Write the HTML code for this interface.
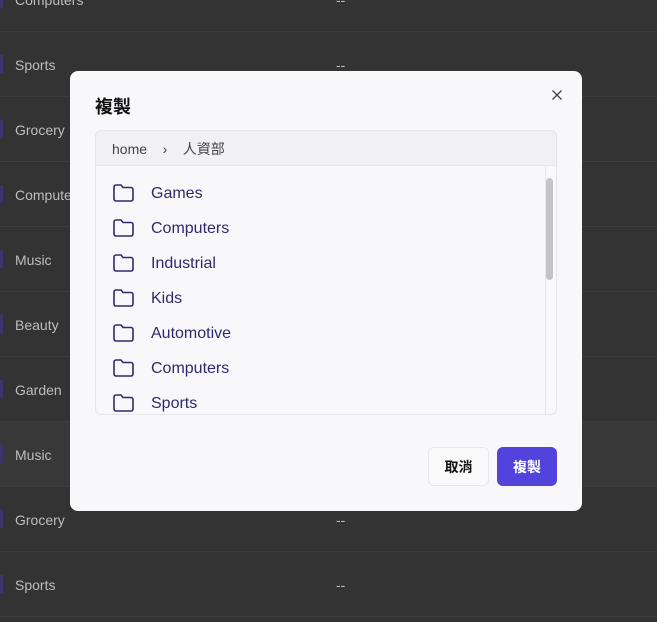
<!DOCTYPE html>
<html><head><meta charset="utf-8"><style>
*{box-sizing:border-box;margin:0;padding:0}
body{width:657px;height:622px;overflow:hidden;background:#333;font-family:"Liberation Sans","Noto Sans CJK TC",sans-serif;position:relative}
.row{position:absolute;left:0;width:657px;height:65px;border-bottom:1px solid #3d3d3d;color:#bdbdbd;font-size:14px}
.row .n{position:absolute;left:15px;top:50%;transform:translateY(-45%)}
.row .d{position:absolute;left:336px;top:50%;transform:translateY(-45%)}
.row .b{position:absolute;left:0;top:23px;width:3px;height:18px;background:#3b3470}
.modal{position:absolute;left:70px;top:71px;width:512px;height:440px;background:#f8f8fb;border-radius:8px}
.title{position:absolute;left:25px;top:22px;font-size:18px;font-weight:bold;color:#111}
.x{position:absolute;left:481px;top:18px}
.bc{position:absolute;left:25px;top:59px;width:462px;height:36px;background:#f1f1f4;border:1px solid #e6e6ea;border-radius:6px 6px 0 0;font-size:14px;color:#444;padding:8px 16px}
.list{position:absolute;left:25px;top:95px;width:462px;height:249px;border:1px solid #e6e6ea;border-top:none;border-radius:0 0 6px 6px;overflow:hidden}
.sb{position:absolute;right:10px;top:0;width:1px;height:100%;background:#e6e6ea}
.th{position:absolute;right:3px;top:12px;width:7px;height:102px;background:#c4c4c8;border-radius:4px}
.it{position:absolute;left:16px;height:24px;display:flex;align-items:center;color:#2e2a6b;font-size:16px}
.it span{position:relative;top:1px}
.it svg{margin-right:16px}
.btn{position:absolute;top:376px;height:39px;border-radius:6px;font-size:14px;font-weight:bold;display:flex;align-items:center;justify-content:center}
</style></head><body>
<div class="row" style="top:-33px"><span class="b"></span><span class="n">Computers</span><span class="d">--</span></div>
<div class="row" style="top:32px"><span class="b"></span><span class="n">Sports</span><span class="d">--</span></div>
<div class="row" style="top:97px"><span class="b"></span><span class="n">Grocery</span><span class="d">--</span></div>
<div class="row" style="top:162px"><span class="b"></span><span class="n">Computers</span><span class="d">--</span></div>
<div class="row" style="top:227px"><span class="b"></span><span class="n">Music</span><span class="d">--</span></div>
<div class="row" style="top:292px"><span class="b"></span><span class="n">Beauty</span><span class="d">--</span></div>
<div class="row" style="top:357px"><span class="b"></span><span class="n">Garden</span><span class="d">--</span></div>
<div class="row" style="top:422px;background:#383838"><span class="b"></span><span class="n">Music</span><span class="d">--</span></div>
<div class="row" style="top:487px"><span class="b"></span><span class="n">Grocery</span><span class="d">--</span></div>
<div class="row" style="top:552px"><span class="b"></span><span class="n">Sports</span><span class="d">--</span></div>
<div class="modal">
<div class="title">複製</div>
<svg class="x" width="12" height="12" viewBox="0 0 12 12"><path d="M1.5 1.5l9 9M10.5 1.5l-9 9" stroke="#444" stroke-width="1.3"/></svg>
<div class="bc">home &nbsp;&nbsp;&nbsp;›&nbsp;&nbsp;&nbsp; 人資部</div>
<div class="list">
<div class="sb"></div><div class="th"></div>
<div class="it" style="top:15px"><svg width="23" height="20" viewBox="0 0 23 20"><path d="M2 4a2 2 0 0 1 2-2h5l2 2.5h8a2 2 0 0 1 2 2V16a2 2 0 0 1-2 2H4a2 2 0 0 1-2-2z" fill="none" stroke="#2e2a6b" stroke-width="1.6"/></svg><span>Games</span></div>
<div class="it" style="top:50px"><svg width="23" height="20" viewBox="0 0 23 20"><path d="M2 4a2 2 0 0 1 2-2h5l2 2.5h8a2 2 0 0 1 2 2V16a2 2 0 0 1-2 2H4a2 2 0 0 1-2-2z" fill="none" stroke="#2e2a6b" stroke-width="1.6"/></svg><span>Computers</span></div>
<div class="it" style="top:85px"><svg width="23" height="20" viewBox="0 0 23 20"><path d="M2 4a2 2 0 0 1 2-2h5l2 2.5h8a2 2 0 0 1 2 2V16a2 2 0 0 1-2 2H4a2 2 0 0 1-2-2z" fill="none" stroke="#2e2a6b" stroke-width="1.6"/></svg><span>Industrial</span></div>
<div class="it" style="top:120px"><svg width="23" height="20" viewBox="0 0 23 20"><path d="M2 4a2 2 0 0 1 2-2h5l2 2.5h8a2 2 0 0 1 2 2V16a2 2 0 0 1-2 2H4a2 2 0 0 1-2-2z" fill="none" stroke="#2e2a6b" stroke-width="1.6"/></svg><span>Kids</span></div>
<div class="it" style="top:155px"><svg width="23" height="20" viewBox="0 0 23 20"><path d="M2 4a2 2 0 0 1 2-2h5l2 2.5h8a2 2 0 0 1 2 2V16a2 2 0 0 1-2 2H4a2 2 0 0 1-2-2z" fill="none" stroke="#2e2a6b" stroke-width="1.6"/></svg><span>Automotive</span></div>
<div class="it" style="top:190px"><svg width="23" height="20" viewBox="0 0 23 20"><path d="M2 4a2 2 0 0 1 2-2h5l2 2.5h8a2 2 0 0 1 2 2V16a2 2 0 0 1-2 2H4a2 2 0 0 1-2-2z" fill="none" stroke="#2e2a6b" stroke-width="1.6"/></svg><span>Computers</span></div>
<div class="it" style="top:225px"><svg width="23" height="20" viewBox="0 0 23 20"><path d="M2 4a2 2 0 0 1 2-2h5l2 2.5h8a2 2 0 0 1 2 2V16a2 2 0 0 1-2 2H4a2 2 0 0 1-2-2z" fill="none" stroke="#2e2a6b" stroke-width="1.6"/></svg><span>Sports</span></div>
</div>
<div class="btn" style="left:358px;width:61px;background:#fafafb;border:1px solid #e8e8ec;color:#111">取消</div>
<div class="btn" style="left:427px;width:60px;background:#5143dc;color:#fff">複製</div>
</div>
</body></html>
